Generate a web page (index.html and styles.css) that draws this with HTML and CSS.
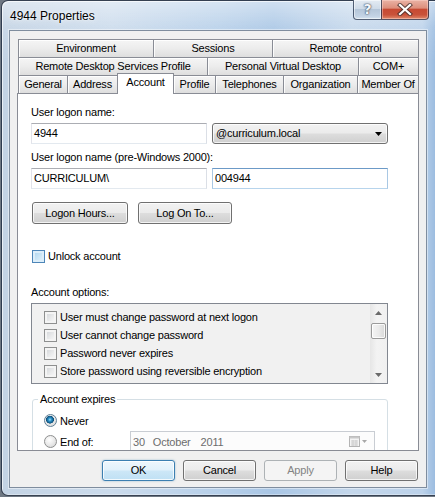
FILE: index.html
```html
<!DOCTYPE html>
<html lang="en">
<head>
<meta charset="utf-8">
<title>4944 Properties</title>
<link rel="stylesheet" href="styles.css">
</head>
<body>
<div class="window">
  <div class="titlebar">
    <div class="title">4944 Properties</div>
    <div class="caps">
      <div class="cap cap-help">?</div>
      <div class="cap cap-close">
        <svg width="16" height="13" viewBox="0 0 16 13">
          <path d="M3 2 L13 11 M13 2 L3 11" stroke="#3a2a2a" stroke-width="4.2" stroke-linecap="square" fill="none" opacity="0.75"/>
          <path d="M3 2 L13 11 M13 2 L3 11" stroke="#ffffff" stroke-width="2.2" stroke-linecap="square" fill="none"/>
        </svg>
      </div>
    </div>
  </div>
  <div class="client">
    <div class="tabs">
      <div class="tabrow">
        <div class="tab w-env">Environment</div>
        <div class="tab w-ses">Sessions</div>
        <div class="tab w-rc">Remote control</div>
      </div>
      <div class="tabrow">
        <div class="tab w-rds">Remote Desktop Services Profile</div>
        <div class="tab w-pvd">Personal Virtual Desktop</div>
        <div class="tab w-com">COM+</div>
      </div>
      <div class="tabrow">
        <div class="tab w-gen">General</div>
        <div class="tab w-addr">Address</div>
        <div class="tab w-acc selected">Account</div>
        <div class="tab w-prof">Profile</div>
        <div class="tab w-tel">Telephones</div>
        <div class="tab w-org">Organization</div>
        <div class="tab w-mem">Member Of</div>
      </div>
    </div>
    <div class="panel">
      <div class="lbl lbl1">User logon name:</div>
      <div class="fieldrow">
        <div class="textbox">4944</div>
        <div class="combo">
          <span>@curriculum.local</span>
          <svg class="combo-arrow" width="7" height="4" viewBox="0 0 7 4"><path d="M0 0 H7 L3.5 4 Z" fill="#000"/></svg>
        </div>
      </div>
      <div class="lbl lbl2">User logon name (pre-Windows 2000):</div>
      <div class="fieldrow">
        <div class="textbox">CURRICULUM\</div>
        <div class="textbox focus">004944</div>
      </div>
      <div class="btnrow">
        <div class="btn b-hours">Logon Hours...</div>
        <div class="btn b-logon">Log On To...</div>
      </div>
      <div class="checkrow unlock"><span class="cb hover"></span><span>Unlock account</span></div>
      <div class="lbl lbl3">Account options:</div>
      <div class="listbox">
        <div class="items">
          <div class="item"><span class="cb"></span><span>User must change password at next logon</span></div>
          <div class="item"><span class="cb"></span><span>User cannot change password</span></div>
          <div class="item"><span class="cb"></span><span>Password never expires</span></div>
          <div class="item"><span class="cb"></span><span>Store password using reversible encryption</span></div>
        </div>
        <div class="vscroll">
          <div class="sb-btn sb-up"><svg width="7" height="4" viewBox="0 0 7 4"><path d="M0 4 H7 L3.5 0 Z" fill="#6a6a6a"/></svg></div>
          <div class="thumb"></div>
          <div class="sb-track"></div>
          <div class="sb-btn sb-down"><svg width="7" height="4" viewBox="0 0 7 4"><path d="M0 0 H7 L3.5 4 Z" fill="#6a6a6a"/></svg></div>
        </div>
      </div>
      <fieldset class="group">
        <legend>Account expires</legend>
        <div class="radiorow first"><span class="radio on"></span><span class="rlabel">Never</span></div>
        <div class="radiorow"><span class="radio"></span><span class="rlabel">End of:</span>
          <div class="datepick">
            <span class="d-day">30</span><span class="d-month">October</span><span class="d-year">2011</span>
            <svg class="cal" width="19" height="11" viewBox="0 0 19 11">
              <rect x="0.5" y="0.5" width="10" height="10" fill="#f4f4f4" stroke="#b4b4b4"/>
              <rect x="0.5" y="0.5" width="10" height="2" fill="#c8c8c8"/>
              <path d="M2 5 H9 M2 7 H9 M2 9 H9 M4 4 V10 M7 4 V10" stroke="#cdcdcd" stroke-width="1"/>
              <path d="M13 4 H18 L15.5 7 Z" fill="#a8a8a8"/>
            </svg>
          </div>
        </div>
      </fieldset>
    </div>
    <div class="dlgbtns">
      <div class="btn dflt">OK</div>
      <div class="btn">Cancel</div>
      <div class="btn disabled">Apply</div>
      <div class="btn">Help</div>
    </div>
  </div>
</div>
</body>
</html>
```

FILE: styles.css
```css
* { box-sizing: border-box; }
html, body { margin: 0; padding: 0; }
body {
  width: 435px;
  height: 497px;
  overflow: hidden;
  background: #6f7883;
  font-family: "Liberation Sans", Arial, sans-serif;
  font-size: 11px;
  letter-spacing: -0.2px;
  color: #000;
}

/* ---------- window frame ---------- */
.window {
  margin-left: 1px;
  width: 440px;
  height: 496px;
  border: 1px solid rgba(28, 38, 54, 0.85);
  border-radius: 7px 7px 0 7px;
  background:
    linear-gradient(180deg, rgba(255,255,255,0.45) 0, rgba(255,255,255,0.12) 26px, rgba(255,255,255,0) 60px),
    linear-gradient(90deg, #c3d3e4 0%, #cbdbec 25%, #b6cfe9 50%, #a9c6e5 62%, #c4d7eb 80%, #bcd2ea 96%, #8fb4dc 100%);
  box-shadow: inset 1px 1px 0 rgba(255,255,255,0.65), inset -1px -1px 0 rgba(255,255,255,0.35);
  display: flex;
  flex-direction: column;
}

.titlebar {
  height: 29px;
  display: flex;
  align-items: flex-start;
}
.title {
  margin: 8px 0 0 8px;
  font-size: 12px;
  line-height: 15px;
  letter-spacing: 0;
  text-shadow: 0 0 6px rgba(255,255,255,0.9), 0 0 2px rgba(255,255,255,0.9);
}
.caps {
  margin-left: auto;
  margin-right: 11px;
  margin-top: -1px;
  display: flex;
}
.cap {
  height: 20px;
  border: 1px solid rgba(35, 50, 75, 0.75);
  border-top: none;
  display: flex;
  align-items: center;
  justify-content: center;
}
.cap-help {
  width: 28px;
  border-right: none;
  border-radius: 0 0 0 4px;
  background: linear-gradient(180deg, #e4ebf3 0%, #cfdbe8 45%, #b5c6d9 50%, #c3d3e4 85%, #d6e3ef 100%);
  box-shadow: inset 0 0 0 1px rgba(255,255,255,0.5);
  color: #f4f7fb;
  font: bold 14px "DejaVu Sans", "Liberation Sans", sans-serif;
  text-shadow: 0 0 2px #2c3a4e, 0 0 1px #2c3a4e;
  padding-bottom: 1px;
}
.cap-close {
  width: 48px;
  border-radius: 0 0 4px 0;
  background: linear-gradient(180deg, #eab3a5 0%, #dd8f7c 42%, #c74a33 50%, #c9523a 78%, #e08a6c 100%);
  box-shadow: inset 0 0 0 1px rgba(255,220,210,0.45);
}

/* ---------- client area ---------- */
.client {
  margin-left: 7px;
  width: 418px;
  height: 458px;
  border: 1px solid #7f8d9e;
  background: #f0f0f0;
  box-shadow: 0 0 0 1px rgba(255,255,255,0.45);
  display: flex;
  flex-direction: column;
}

/* ---------- tabs ---------- */
.tabs {
  margin: 8px 0 0 8px;
  width: 401px;
}
.tabrow {
  display: flex;
  height: 18px;
  align-items: flex-start;
}
.tab {
  height: 18px;
  border: 1px solid #898c95;
  border-bottom: none;
  background: linear-gradient(180deg, #f5f5f5 0%, #ececec 50%, #dedede 100%);
  box-shadow: inset 1px 1px 0 rgba(255,255,255,0.85);
  line-height: 17px;
  text-align: center;
  white-space: nowrap;
  overflow: hidden;
}
.tab + .tab { margin-left: -1px; }
.tab.selected {
  position: relative;
  z-index: 2;
  margin-top: -2px;
  height: 21px;
  background: #fff;
  box-shadow: none;
}
.w-env { width: 136px; }
.w-ses { width: 120px; }
.w-rc { width: 147px; }
.w-rds { width: 190px; }
.w-pvd { width: 152px; }
.w-com { width: 61px; }
.w-gen { width: 50px; }
.w-addr { width: 51px; }
.w-acc { width: 57px; }
.w-prof { width: 43px; }
.w-tel { width: 69px; }
.w-org { width: 75px; }
.w-mem { width: 62px; }

/* ---------- tab page ---------- */
.panel {
  margin-left: 7px;
  width: 402px;
  height: 358px;
  border: 1px solid #898c95;
  background: #fff;
  padding: 12px 0 0 13px;
  overflow: hidden;
}
.lbl { height: 13px; line-height: 13px; white-space: nowrap; }
.lbl1 { margin-bottom: 4px; }
.lbl2 { margin-top: 7px; margin-bottom: 4px; }
.lbl3 { margin-top: 23px; margin-bottom: 4px; }

.fieldrow {
  display: flex;
  gap: 5px;
  width: 357px;
}
.textbox {
  width: 176px;
  height: 21px;
  border: 1px solid;
  border-color: #abadb3 #dbdfe6 #e3e9ef #e2e3ea;
  background: #fff;
  padding-left: 2px;
  line-height: 19px;
  white-space: nowrap;
}
.textbox.focus {
  border-color: #6c9ac7 #a9c8e4 #b7d4ec #a9c8e4;
}
.combo {
  width: 176px;
  height: 21px;
  border: 1px solid #707070;
  border-radius: 3px;
  background: linear-gradient(180deg, #f2f2f2 0%, #ebebeb 48%, #dddddd 52%, #cfcfcf 100%);
  box-shadow: inset 0 0 0 1px rgba(255,255,255,0.75);
  padding: 0 5px 0 3px;
  display: flex;
  align-items: center;
  justify-content: space-between;
  line-height: 19px;
}

.btnrow {
  margin: 13px 0 0 1px;
  display: flex;
  gap: 10px;
}
.btn {
  height: 22px;
  border: 1px solid #707070;
  border-radius: 3px;
  background: linear-gradient(180deg, #f2f2f2 0%, #ebebeb 48%, #dddddd 52%, #cfcfcf 100%);
  box-shadow: inset 0 0 0 1px rgba(255,255,255,0.75);
  text-align: center;
  line-height: 20px;
  white-space: nowrap;
}
.b-hours { width: 96px; }
.b-logon { width: 94px; }

/* checkboxes */
.cb {
  flex: none;
  width: 13px;
  height: 13px;
  border: 1px solid #8e8f8f;
  background: linear-gradient(135deg, #cfd2d6 0%, #e9eaeb 55%, #fbfbfb 100%);
  box-shadow: inset 0 0 0 2px #f4f4f4;
}
.cb.hover {
  border-color: #4d86b8;
  background: linear-gradient(135deg, #a9d3ef 0%, #cce6f6 55%, #e8f5fc 100%);
  box-shadow: inset 0 0 0 2px #dceefa;
}
.checkrow {
  margin: 26px 0 0 1px;
  height: 13px;
  display: flex;
  align-items: center;
  gap: 3px;
  line-height: 13px;
}

/* list box */
.listbox {
  width: 357px;
  height: 81px;
  border: 1px solid #828790;
  background: #f1f1f1;
  display: flex;
}
.items {
  flex: 1;
  padding: 4px 0 0 12px;
}
.item {
  height: 18px;
  display: flex;
  align-items: center;
  gap: 3px;
  white-space: nowrap;
}
.vscroll {
  width: 17px;
  display: flex;
  flex-direction: column;
  background: linear-gradient(90deg, #e6e6e6 0%, #f3f3f3 40%, #f0f0f0 100%);
}
.sb-btn {
  height: 19px;
  display: flex;
  align-items: center;
  justify-content: center;
}
.sb-up { padding-bottom: 1px; }
.sb-down { padding-top: 2px; }
.thumb {
  margin-left: 1px;
  width: 15px;
  height: 16px;
  border: 1px solid #9a9a9a;
  border-radius: 2px;
  background: linear-gradient(90deg, #f4f4f4 0%, #eaeaea 50%, #d8d8d8 100%);
  box-shadow: inset 0 0 0 1px rgba(255,255,255,0.8);
}
.sb-track { flex: 1; }

/* group box */
.group {
  margin: 9px 0 0 1px;
  width: 356px;
  height: 90px;
  border: 1px solid #d5dfe5;
  border-radius: 3px;
  padding: 0 0 0 5px;
  min-width: 0;
}
.group legend {
  padding: 0 2px;
  line-height: 13px;
}
.radiorow {
  margin-left: 6px;
  height: 21px;
  display: flex;
  align-items: center;
  gap: 3px;
  white-space: nowrap;
}
.radiorow.first { margin-top: 4px; }
.radio {
  flex: none;
  width: 13px;
  height: 13px;
  border: 1px solid #8e8f8f;
  border-radius: 50%;
  background: radial-gradient(circle at 40% 35%, #ffffff 0%, #ececec 45%, #d2d2d2 100%);
}
.radio.on {
  border-color: #5f7f96;
  background:
    radial-gradient(circle at 45% 42%, #9fe3ff 0, #2f93c9 1.6px, #125f8f 3.2px, #0d4c74 3.7px, rgba(13,76,116,0) 4.2px),
    radial-gradient(circle at 40% 35%, #ffffff 0%, #ececec 45%, #d2d2d2 100%);
}
.rlabel { display: inline-block; }
.radiorow:not(.first) .rlabel { width: 67px; }
.datepick {
  width: 245px;
  height: 22px;
  border: 1px solid #c9cdd3;
  background: #fcfcfc;
  color: #6d6d6d;
  display: flex;
  align-items: center;
  padding: 0 6px 0 2px;
  line-height: 20px;
}
.d-month { margin-left: 8px; }
.d-year { margin-left: 10px; }
.cal { margin-left: auto; }

/* ---------- dialog buttons ---------- */
.dlgbtns {
  margin-top: 9px;
  padding-right: 8px;
  display: flex;
  justify-content: flex-end;
  gap: 8px;
}
.dlgbtns .btn {
  width: 73px;
  height: 21px;
  line-height: 19px;
}
.btn.dflt {
  border-color: #3c7fb1;
  background: linear-gradient(180deg, #eef7fd 0%, #e2f1fb 48%, #cde7f7 52%, #bfe0f4 100%);
  box-shadow: inset 0 0 0 1px rgba(255,255,255,0.8), 0 0 2px rgba(60,127,177,0.5);
}
.btn.disabled {
  border-color: #adb2b5;
  background: #f4f4f4;
  box-shadow: none;
  color: #838383;
}
```
